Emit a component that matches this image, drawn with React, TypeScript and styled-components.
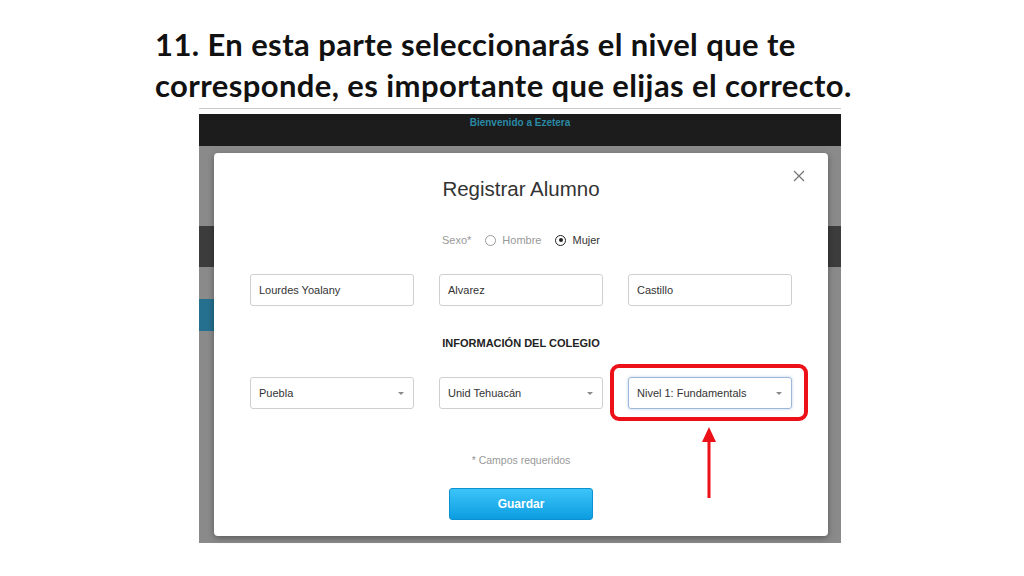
import React from 'react';
import styled, { createGlobalStyle } from 'styled-components';

const GlobalStyle = createGlobalStyle`
  html, body { margin: 0; padding: 0; background: #ffffff; }
  body { font-family: 'Liberation Sans', Arial, sans-serif; }
  * { box-sizing: border-box; }
`;

const Slide = styled.div`
  width: 1024px;
  height: 576px;
  background: #ffffff;
  padding-top: 24px;
  overflow: hidden;
`;

const Heading = styled.h1`
  margin: 0 0 2px 155px;
  font-family: Lato, 'Open Sans', sans-serif;
  font-weight: 700;
  font-size: 31px;
  letter-spacing: 0.4px;
  line-height: 41px;
  color: #111111;
`;

const Shot = styled.div`
  margin-left: 199px;
  width: 642px;
  border-top: 1px solid #c9c9c9;
  padding-top: 5px;
  background: #ffffff;
`;

const TopBar = styled.div`
  height: 32px;
  background: #1c1c1c;
  padding-top: 3px;
  text-align: center;
  font-size: 10px;
  line-height: 12px;
  font-weight: 700;
  color: #2a89a5;
`;

const Backdrop = styled.div`
  position: relative;
  height: 397px;
  background: #8a8a8a;
  padding-top: 80px;
`;

const DarkBand = styled.div`
  height: 41px;
  background: #3c3c3c;
`;

const TealTab = styled.div`
  margin-top: 32px;
  width: 80px;
  height: 32px;
  background: #24708e;
`;

const Modal = styled.div`
  position: absolute;
  left: 15px;
  top: 7px;
  width: 614px;
  height: 383px;
  background: #ffffff;
  border-radius: 4px;
  box-shadow: 0 2px 6px rgba(0, 0, 0, 0.35);
  padding: 24px 36px 16px;
  display: flex;
  flex-direction: column;
  align-items: center;
`;

const Close = styled.svg`
  position: absolute;
  right: 23px;
  top: 17px;
`;

const ModalTitle = styled.div`
  font-size: 20.5px;
  line-height: 24px;
  color: #333333;
`;

const SexRow = styled.div`
  margin-top: 32px;
  display: flex;
  align-items: center;
  height: 14px;
  font-size: 11px;
  color: #999999;
`;

const RadioItem = styled.label<{ $checked?: boolean }>`
  display: flex;
  align-items: center;
  margin-left: 14px;
  color: ${(p) => (p.$checked ? '#333333' : '#999999')};
`;

const RadioDot = styled.span<{ $checked?: boolean }>`
  width: 11px;
  height: 11px;
  border-radius: 50%;
  border: 1.5px solid ${(p) => (p.$checked ? '#222222' : '#9a9a9a')};
  margin-right: 6px;
  display: flex;
  align-items: center;
  justify-content: center;
  &::after {
    content: '';
    width: 4px;
    height: 4px;
    border-radius: 50%;
    background: ${(p) => (p.$checked ? '#222222' : 'transparent')};
  }
`;

const FieldRow = styled.div<{ $gap: number }>`
  margin-top: ${(p) => p.$gap}px;
  width: 100%;
  display: grid;
  grid-template-columns: repeat(3, 164px);
  column-gap: 25px;
`;

const Field = styled.div<{ $focus?: boolean }>`
  position: relative;
  height: 32px;
  border: 1px solid ${(p) => (p.$focus ? '#9db7d8' : '#cfcfcf')};
  border-radius: 3px;
  box-shadow: ${(p) => (p.$focus ? '0 0 3px rgba(120,160,210,0.5)' : 'none')};
  padding-left: 8px;
  display: flex;
  align-items: center;
  font-size: 11px;
  color: #333333;
`;

const Caret = styled.span`
  position: absolute;
  right: 9px;
  top: 50%;
  margin-top: -1px;
  width: 0;
  height: 0;
  border-left: 3px solid transparent;
  border-right: 3px solid transparent;
  border-top: 3px solid #8a8a8a;
`;

const SectionTitle = styled.div`
  margin-top: 30px;
  font-size: 11px;
  line-height: 14px;
  font-weight: 700;
  color: #222222;
`;

const Required = styled.div`
  margin-top: 44px;
  font-size: 10.5px;
  line-height: 14px;
  color: #999999;
`;

const SaveButton = styled.button`
  margin-top: 21px;
  width: 144px;
  height: 32px;
  border: 1px solid #0b90d2;
  border-radius: 3px;
  background: linear-gradient(#3cc4f8, #0c9de1);
  color: #ffffff;
  font-family: 'Liberation Sans', Arial, sans-serif;
  font-weight: 700;
  font-size: 12px;
`;

const Highlight = styled.div`
  position: absolute;
  left: 396px;
  top: 211px;
  width: 198px;
  height: 57px;
  border: 4px solid #ec1118;
  border-radius: 9px;
`;

const Arrow = styled.svg`
  position: absolute;
  left: 487px;
  top: 274px;
`;

export default function App() {
  return (
    <Slide>
      <GlobalStyle />
      <Heading>
        11. En esta parte seleccionarás el nivel que te
        <br />
        corresponde, es importante que elijas el correcto.
      </Heading>
      <Shot>
        <TopBar>Bienvenido a Ezetera</TopBar>
        <Backdrop>
          <DarkBand />
          <TealTab />
          <Modal>
            <Close width="12" height="12" viewBox="0 0 12 12">
              <path d="M1 1 L11 11 M11 1 L1 11" stroke="#777777" strokeWidth="1.3" fill="none" />
            </Close>
            <ModalTitle>Registrar Alumno</ModalTitle>
            <SexRow>
              <span>Sexo*</span>
              <RadioItem>
                <RadioDot />
                Hombre
              </RadioItem>
              <RadioItem $checked>
                <RadioDot $checked />
                Mujer
              </RadioItem>
            </SexRow>
            <FieldRow $gap={27}>
              <Field>Lourdes Yoalany</Field>
              <Field>Alvarez</Field>
              <Field>Castillo</Field>
            </FieldRow>
            <SectionTitle>INFORMACIÓN DEL COLEGIO</SectionTitle>
            <FieldRow $gap={27}>
              <Field>
                Puebla
                <Caret />
              </Field>
              <Field>
                Unid Tehuacán
                <Caret />
              </Field>
              <Field $focus>
                Nivel 1: Fundamentals
                <Caret />
              </Field>
            </FieldRow>
            <Required>* Campos requeridos</Required>
            <SaveButton>Guardar</SaveButton>
            <Highlight />
            <Arrow width="16" height="72" viewBox="0 0 16 72">
              <polygon points="8,0 15,15 1,15" fill="#ec1118" />
              <rect x="6.5" y="12" width="3" height="59" fill="#ec1118" />
            </Arrow>
          </Modal>
        </Backdrop>
      </Shot>
    </Slide>
  );
}
